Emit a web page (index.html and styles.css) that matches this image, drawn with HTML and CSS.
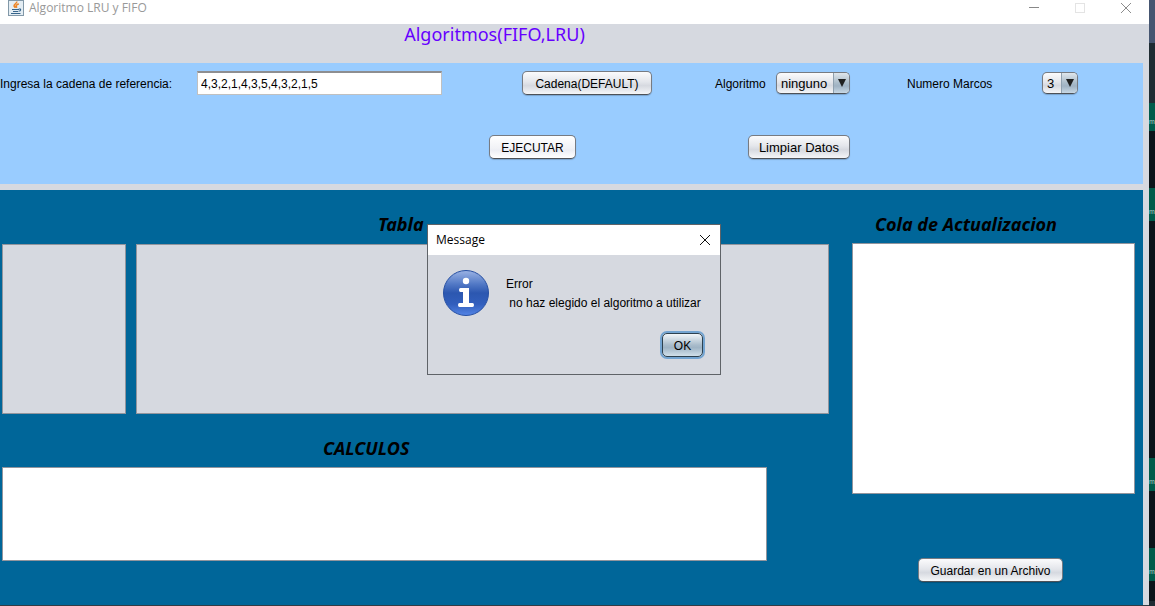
FILE: index.html
```html
<!DOCTYPE html>
<html lang="es">
<head>
<meta charset="utf-8">
<title>Algoritmo LRU y FIFO</title>
<link rel="stylesheet" href="styles.css">
</head>
<body>
<div class="window">
  <header class="titlebar">
    <svg class="app-icon" width="16" height="16" viewBox="0 0 16 16" aria-hidden="true">
      <rect x=".5" y=".5" width="15" height="15" fill="#e4edf3" stroke="#8298a8"/>
      <path d="M8.600 1.500c1 1.600-2.900 2.700-2.500 4.400.1.800 1 1.300 1.200 2M10.700 3.800C9 4.700 7.800 5.100 8 6c.1.600.9.900.4 1.900" fill="none" stroke="#ed8424" stroke-width="1.600"/>
      <path d="M4 9.500h7M5 11.500h5M10.700 9c2.800-.5 2.500 2-.2 2.300M3 13.500h9.500" fill="none" stroke="#37658c" stroke-width="1.100"/>
    </svg>
    <span class="app-title">Algoritmo LRU y FIFO</span>
    <div class="window-actions">
      <button type="button" aria-label="Minimizar"><svg width="12" height="12" viewBox="0 0 12 12"><path d="M1 5.500h10" stroke="#888"/></svg></button>
      <button type="button" aria-label="Maximizar"><svg width="12" height="12" viewBox="0 0 12 12"><rect x="1.500" y="1.500" width="9" height="9" fill="none" stroke="#e4e4e4"/></svg></button>
      <button type="button" aria-label="Cerrar"><svg width="12" height="12" viewBox="0 0 12 12"><path d="M1 1l10 10M11 1L1 11" stroke="#8c8c8c"/></svg></button>
    </div>
  </header>

  <h1 class="heading">Algoritmos(FIFO,LRU)</h1>

  <form class="controls">
    <div class="row row-main">
      <label class="reference-label" for="cadena">Ingresa la cadena de referencia:</label>
      <input class="field" id="cadena" type="text" value="4,3,2,1,4,3,5,4,3,2,1,5">
      <button class="btn btn-default" type="button">Cadena(DEFAULT)</button>
      <label class="algorithm-label" for="algoritmo">Algoritmo</label>
      <span class="combo combo-wide">
        <select id="algoritmo"><option>ninguno</option><option>FIFO</option><option>LRU</option></select>
        <span class="combo-arrow"><svg width="8" height="8" viewBox="0 0 8 8"><path d="M0 0h8L4 8z" fill="#202020"/></svg></span>
      </span>
      <label class="frames-label" for="marcos">Numero Marcos</label>
      <span class="combo combo-narrow">
        <select id="marcos"><option>3</option><option>4</option><option>5</option></select>
        <span class="combo-arrow"><svg width="8" height="8" viewBox="0 0 8 8"><path d="M0 0h8L4 8z" fill="#202020"/></svg></span>
      </span>
    </div>
    <div class="row row-actions">
      <button class="btn btn-run" type="button">EJECUTAR</button>
      <button class="btn btn-clear" type="button">Limpiar Datos</button>
    </div>
  </form>

  <main class="results">
    <section class="left">
      <h2 class="section-title title-table">Tabla</h2>
      <div class="tables">
        <div class="panel"></div>
        <div class="panel"></div>
      </div>
      <h2 class="section-title title-calc" id="calculos">CALCULOS</h2>
      <textarea class="area area-calc" aria-labelledby="calculos"></textarea>
    </section>
    <section class="right">
      <h2 class="section-title title-queue" id="cola">Cola de Actualizacion</h2>
      <textarea class="area area-queue" aria-labelledby="cola"></textarea>
      <button class="btn btn-save" type="button">Guardar en un Archivo</button>
    </section>
  </main>

  <dialog class="message" open aria-labelledby="message-title">
    <div class="message-bar">
      <span id="message-title">Message</span>
      <button class="message-close" type="button" aria-label="Cerrar"><svg width="12" height="12" viewBox="0 0 12 12"><path d="M1 1l10 10M11 1L1 11" stroke="#111"/></svg></button>
    </div>
    <div class="message-body">
      <svg class="info" width="48" height="48" viewBox="0 0 48 48" aria-hidden="true">
        <defs><linearGradient id="blue" x1="0" y1="0" x2="0" y2="1">
          <stop offset="0" stop-color="#9bb3e4"/><stop offset=".3" stop-color="#5279c6"/><stop offset=".5" stop-color="#2c57b0"/><stop offset=".75" stop-color="#325fbd"/><stop offset="1" stop-color="#5485e6"/>
        </linearGradient></defs>
        <circle cx="24" cy="24" r="22.500" fill="url(#blue)" stroke="#2750a3"/>
        <circle cx="24" cy="12" r="3.200" fill="#fff"/>
        <path d="M18.500 19H27v15h3.500q1.500 0 1.500 2t-1.500 2h-13q-1.500 0-1.500-2t1.500-2H21V23h-2.500q-1.500 0-1.500-2t1.500-2z" fill="#fff"/>
      </svg>
      <p class="message-text">Error
 no haz elegido el algoritmo a utilizar</p>
    </div>
    <button class="btn btn-ok" type="button">OK</button>
  </dialog>
</div>
<aside class="backdrop" aria-hidden="true">
  <div class="strip sky"></div>
  <div class="strip bar"></div>
  <div class="strip bubble">m</div>
  <div class="strip gap"></div>
  <div class="strip bubble">m</div>
  <div class="strip chat"></div>
  <div class="strip bubble">m</div>
  <div class="strip gap"></div>
  <div class="strip bubble">m</div>
  <div class="strip rest"></div>
  <div class="strip foot"></div>
</aside>
</body>
</html>
```

FILE: styles.css
```css
* { box-sizing: border-box; }

body {
  margin: 0;
  min-height: 100vh;
  display: grid;
  grid-template-columns: 1fr 6px;
  font: 12px/16px "Liberation Sans", Arial, sans-serif;
  color: #000;
}

button, input, select, textarea { font: inherit; color: inherit; }
h1, h2, p { margin: 0; }
svg { display: block; }

.window {
  position: relative;
  display: flex;
  flex-direction: column;
  background: #d6d9e0;
  border-bottom: 1px solid #333c44;
}

/* Title bar */
.titlebar {
  display: flex;
  align-items: center;
  height: 24px;
  padding: 0 8px 8px;
  background: #fff;
}
.app-title {
  flex: 1;
  margin-left: 5px;
  font-family: "Open Sans", sans-serif;
  color: #999;
}
.window-actions { display: flex; gap: 22px; padding-right: 3px; }
.window-actions button {
  display: grid;
  place-items: center;
  width: 24px;
  height: 16px;
  padding: 0;
  border: 0;
  background: none;
}

.heading {
  height: 39px;
  padding-right: 160px;
  font: 18px/21px "Noto Sans", sans-serif;
  text-align: center;
  color: #60f;
}

/* Controls */
.controls {
  height: 121px;
  margin-right: 6px;
  padding-top: 8px;
  background: #9cf;
}
.controls label { padding-top: 2px; }
.row { display: grid; align-items: center; }
.row-main { grid-template-columns: 197fr 245fr 80fr 130px 63fr 61px 74px 57fr 135fr 36px 65fr; }
.row-main .btn-default { grid-column: 4; }
.row-main .algorithm-label { grid-column: 6; }
.row-main .frames-label { grid-column: 9; }
.row-actions {
  grid-template-columns: 489fr 87px 172fr 102px 293fr;
  margin-top: 40px;
}
.btn-run { grid-column: 2; }
.btn-clear { grid-column: 4; }

.field {
  width: 100%;
  height: 24px;
  padding: 0 3px;
  border: 1px solid #c0c0c0;
  border-top: 2px solid #8d8e91;
  background: #fff;
}
.btn {
  height: 24px;
  padding: 2px 0 0;
  border: 1px solid #777b82;
  border-bottom-color: #4d5157;
  border-radius: 5px;
  background: linear-gradient(#fbfbfc, #e4e6eb 45%, #d6d9e0 62%, #f5f6f8);
  box-shadow: 0 1px 1px #0003;
  white-space: nowrap;
}
.btn-run { background: linear-gradient(#fff, #f1f2f6 55%, #eceef4 65%, #fff); }

.combo {
  position: relative;
  display: flex;
  height: 22px;
}
.combo select {
  appearance: none;
  width: 100%;
  padding: 2px 20px 0 4px;
  border: 1px solid #777b82;
  border-bottom-color: #4d5157;
  border-radius: 5px;
  background: linear-gradient(#fbfbfc, #e4e6eb 45%, #d6d9e0 62%, #f5f6f8);
  box-shadow: 0 1px 1px #0003;
}
.combo select, .btn-clear { font-size: 13px; }
.combo-arrow {
  position: absolute;
  inset: 1px 1px 1px auto;
  display: grid;
  place-items: center;
  width: 16px;
  border-left: 1px solid #8fa0af;
  border-radius: 0 4px 4px 0;
  background: linear-gradient(#dfe6ec, #aabbc9 50%, #9fb2c3 65%, #c8d8e5);
  pointer-events: none;
}

/* Results */
.results {
  flex: 1;
  display: grid;
  grid-template-columns: 827fr 283fr;
  gap: 23px;
  margin: 6px 6px 0 0;
  padding: 0 8px 0 2px;
  background: #069;
}
.left, .right { display: flex; flex-direction: column; }
.section-title {
  height: 54px;
  padding-top: 20px;
  font: italic bold 18px/28px "Noto Sans", sans-serif;
}
.title-table { padding-left: 376px; }
.title-calc { height: 53px; padding-left: 321px; }
.title-queue { height: 53px; padding-left: 23px; }
.tables {
  display: grid;
  grid-template-columns: 124fr 693fr;
  gap: 10px;
  height: 170px;
}
.panel { border: 1px solid #92959d; background: #d6d9e0; }
.area {
  display: block;
  width: 100%;
  border: 1px solid #92959d;
  background: #fff;
  resize: none;
}
.area-calc { width: 92.5%; height: 94px; }
.area-queue { height: 251px; }
.btn-save {
  width: 145px;
  margin: 64px auto 23px 66px;
}

/* Message dialog */
.message {
  position: absolute;
  inset: 224px 1px auto 0;
  width: 294px;
  height: 151px;
  margin: 0 auto;
  padding: 0;
  border: 1px solid #5f6368;
  background: #d6d9e0;
  color: #000;
}
.message-bar {
  display: flex;
  align-items: center;
  justify-content: space-between;
  height: 30px;
  padding: 0 9px 0 8px;
  background: #fff;
  font-family: "Open Sans", sans-serif;
}
.message-close { padding: 0; border: 0; background: none; }
.message-body { display: flex; gap: 16px; padding: 14px 14px 0; }
.message-text { padding-top: 6px; line-height: 19px; white-space: pre; }
.btn-ok {
  display: block;
  width: 41px;
  margin: 16px 17px 0 auto;
  border-color: #2d414f;
  background: linear-gradient(#f2f6f9, #a9bccb 50%, #9fb4c5 62%, #d1e0ea);
  box-shadow: 0 0 0 2px #73a4d1;
}

/* Slice of the chat application behind the window */
.backdrop { display: flex; flex-direction: column; background: #0b141a; }
.sky { height: 43px; background: #465671; }
.bar { height: 60px; background: #1f2c33; }
.bubble {
  display: flex;
  align-items: end;
  height: 33px;
  padding-bottom: 4px;
  background: #005c4b;
  color: #b0cec8;
  font-size: 7px;
  line-height: 10px;
}
.bar + .bubble { height: 28px; }
.gap { height: 57px; }
.chat { height: 237px; }
.rest { flex: 1; }
.foot { height: 5px; background: #1f2c33; }
```
